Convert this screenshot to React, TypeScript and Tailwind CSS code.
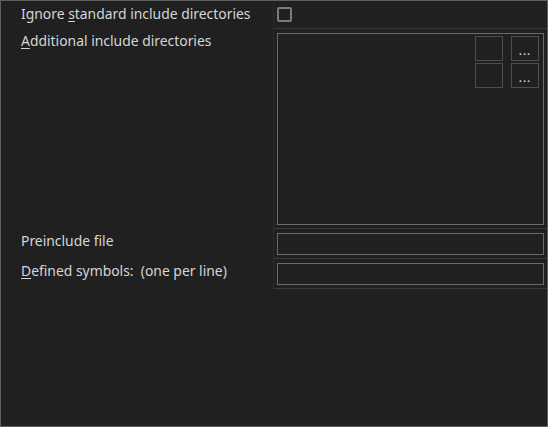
import React from "react";

const font = { fontFamily: '"Noto Sans", "Open Sans", sans-serif' };

const Label: React.FC<{ children: React.ReactNode; top?: string }> = ({ children, top = "pt-[3px]" }) => (
  <div className={`pl-[20px] ${top} text-[13.9px] leading-[18px] text-[#d6d6d6] whitespace-nowrap`}>{children}</div>
);

const Cell: React.FC<{ children?: React.ReactNode; h: string }> = ({ children, h }) => (
  <div className={`${h} border-l border-l-[#2a2a2a] border-b border-b-[#3a3a3a] pl-[3px] pr-[3px] pt-[4px]`}>{children}</div>
);

const SmallBtn: React.FC<{ dots?: boolean }> = ({ dots }) => (
  <div className="w-[28px] h-[25px] border border-[#4e4e4e] flex items-end justify-center pb-[3px]">
    {dots && <span className="text-[12px] leading-[12px] text-[#e0e0e0] tracking-[1px]">...</span>}
  </div>
);

export default function App() {
  return (
    <div
      className="w-[548px] h-[427px] bg-[#202020] border border-[#5f5f5f] overflow-hidden"
      style={font}
    >
      <div className="grid grid-cols-[272px_1fr]">
        <Label top="pt-[4px]">
          Ignore <u className="underline-offset-2">s</u>tandard include directories
        </Label>
        <div className="h-[28px] border-l border-l-[#2a2a2a] border-b border-b-[#3a3a3a] pl-[3px] pt-[6px]">
          <div className="w-[15px] h-[15px] border-2 border-[#7b7b7b] rounded-[2px]" />
        </div>

        <Label>
          <u className="underline-offset-2">A</u>dditional include directories
        </Label>
        <Cell h="h-[200px]">
          <div className="h-[192px] border border-[#6c6c6c] flex flex-col items-end pt-[2px] pr-[4px] gap-[2px]">
            <div className="flex gap-[8px]">
              <SmallBtn />
              <SmallBtn dots />
            </div>
            <div className="flex gap-[8px]">
              <SmallBtn />
              <SmallBtn dots />
            </div>
          </div>
        </Cell>

        <Label>Preinclude file</Label>
        <Cell h="h-[30px]">
          <div className="h-[22px] border border-[#6c6c6c]" />
        </Cell>

        <Label>
          <u className="underline-offset-2">D</u>efined symbols:&nbsp; (one per line)
        </Label>
        <Cell h="h-[30px]">
          <div className="h-[22px] border border-[#6c6c6c]" />
        </Cell>
      </div>
    </div>
  );
}
